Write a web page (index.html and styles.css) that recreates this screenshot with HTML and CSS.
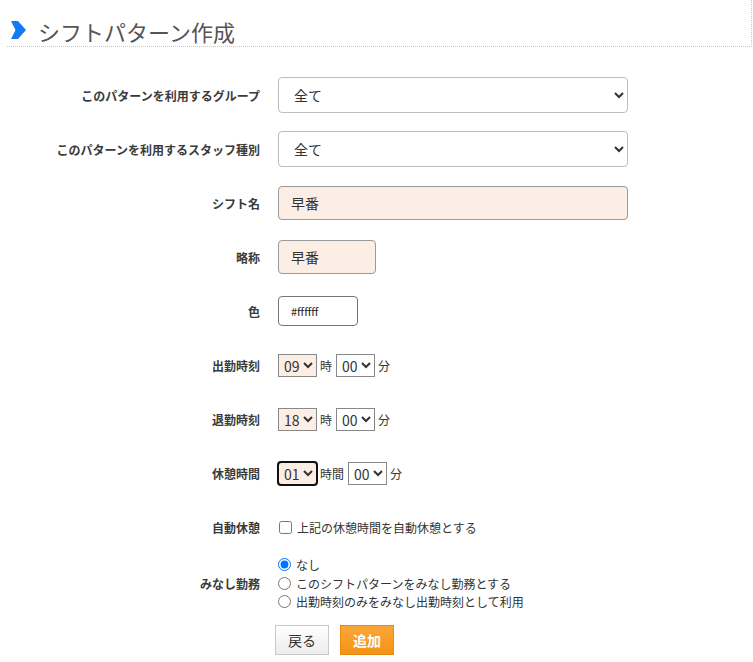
FILE: index.html
```html
<!DOCTYPE html>
<html lang="ja">
<head>
<meta charset="utf-8">
<title>シフトパターン作成</title>
<link rel="stylesheet" href="styles.css">
</head>
<body>
<div class="page">
  <h1 class="title">
    <svg class="chev" width="15" height="18" viewBox="0 0 15 18"><polygon points="0,0 7,0 15,9 7,18 0,18 4.5,9" fill="#1479f7"/></svg>
    <span>シフトパターン作成</span>
  </h1>
  <form class="form">
    <div class="row">
      <label class="lbl">このパターンを利用するグループ</label>
      <div class="field"><select class="sel-wide"><option>全て</option></select></div>
    </div>
    <div class="row">
      <label class="lbl">このパターンを利用するスタッフ種別</label>
      <div class="field"><select class="sel-wide"><option>全て</option></select></div>
    </div>
    <div class="row">
      <label class="lbl">シフト名</label>
      <div class="field"><input class="txt txt-wide" type="text" value="早番"></div>
    </div>
    <div class="row">
      <label class="lbl">略称</label>
      <div class="field"><input class="txt txt-short" type="text" value="早番"></div>
    </div>
    <div class="row">
      <label class="lbl">色</label>
      <div class="field"><input class="color" type="text" value="#ffffff"></div>
    </div>
    <div class="row">
      <label class="lbl">出勤時刻</label>
      <div class="field inline">
        <select class="sel-time peach"><option>09</option></select><span class="unit">時</span>
        <select class="sel-time"><option>00</option></select><span class="unit">分</span>
      </div>
    </div>
    <div class="row">
      <label class="lbl">退勤時刻</label>
      <div class="field inline">
        <select class="sel-time peach"><option>18</option></select><span class="unit">時</span>
        <select class="sel-time"><option>00</option></select><span class="unit">分</span>
      </div>
    </div>
    <div class="row">
      <label class="lbl">休憩時間</label>
      <div class="field inline">
        <select class="sel-time peach focus"><option>01</option></select><span class="unit">時間</span>
        <select class="sel-time"><option>00</option></select><span class="unit">分</span>
      </div>
    </div>
    <div class="row">
      <label class="lbl">自動休憩</label>
      <div class="field">
        <label class="check"><input type="checkbox"><span>上記の休憩時間を自動休憩とする</span></label>
      </div>
    </div>
    <div class="row row-radio">
      <label class="lbl">みなし勤務</label>
      <div class="field radios">
        <label class="radio"><input type="radio" name="minashi" checked><span>なし</span></label>
        <label class="radio"><input type="radio" name="minashi"><span>このシフトパターンをみなし勤務とする</span></label>
        <label class="radio"><input type="radio" name="minashi"><span>出勤時刻のみをみなし出勤時刻として利用</span></label>
      </div>
    </div>
    <div class="actions">
      <button type="button" class="btn btn-back">戻る</button>
      <button type="button" class="btn btn-add">追加</button>
    </div>
  </form>
</div>
</body>
</html>
```
FILE: styles.css
```css
html, body {
  margin: 0;
  padding: 0;
  background: #fff;
}
body {
  font-family: "Noto Sans CJK JP", "Noto Sans", sans-serif;
  color: #333;
}
.page {
  width: 753px;
}
.title {
  margin: 0 1px 0 7px;
  padding: 15px 0 0 4px;
  height: 31px;
  display: flex;
  align-items: center;
  gap: 12px;
  font-size: 22px;
  font-weight: normal;
  color: #555;
  border-right: 1px dotted #c8c8c8;
  border-bottom: 1px dotted #c8c8c8;
}
.chev {
  display: block;
  flex: none;
  margin-top: -1px;
}
.form {
  padding-top: 21px;
}
.row {
  display: grid;
  grid-template-columns: 260px 1fr;
  column-gap: 18px;
  min-height: 54px;
  align-items: center;
}
.lbl {
  text-align: right;
  font-size: 12px;
  font-weight: bold;
  color: #3a3a3a;
}
.field {
  font-size: 12px;
}
.inline {
  display: flex;
  align-items: center;
  gap: 3px;
}
.sel-wide {
  width: 350px;
  height: 36px;
  border: 1px solid #bdbdbd;
  border-radius: 4px;
  background: #fff;
  padding: 0 10px 0 11px;
  font-family: inherit;
  font-size: 14px;
  color: #333;
}
.txt {
  height: 34px;
  box-sizing: border-box;
  border: 1px solid #999;
  border-radius: 4px;
  background: #fdeee5;
  padding: 0 12px;
  font-family: inherit;
  font-size: 14px;
  color: #333;
  margin: 0;
}
.txt-wide { width: 350px; }
.txt-short { width: 98px; }
.color {
  width: 80px;
  height: 30px;
  box-sizing: border-box;
  border: 1px solid #767676;
  border-radius: 4px;
  background: #fff;
  padding: 0 12px;
  font-family: inherit;
  font-size: 11px;
  color: #222;
  margin: 0;
}
.sel-time {
  height: 23px;
  width: 39px;
  border: 1px solid #888;
  border-radius: 0;
  background: #fff;
  padding: 0 0 0 1px;
  font-family: inherit;
  font-size: 14px;
  color: #333;
  margin: 0;
}
.peach { background: #fdeee5; }
.focus {
  outline: 2px solid #111;
  outline-offset: -1px;
  border-radius: 3px;
}
.unit {
  font-size: 12px;
  color: #333;
  margin-right: 1px;
}
.check, .radio {
  display: flex;
  align-items: center;
  font-size: 12px;
  color: #333;
}
.check input {
  margin: 0 5px 0 1px;
  width: 13px;
  height: 13px;
}
.row-radio {
  min-height: 58px;
}
.radios {
  display: flex;
  flex-direction: column;
}
.radio {
  height: 18.5px;
}
.radio input {
  margin: 0 5px 0 0;
  width: 13px;
  height: 13px;
}
.actions {
  display: flex;
  gap: 11px;
  padding: 13px 0 0 275px;
}
.btn {
  width: 54px;
  height: 30px;
  box-sizing: border-box;
  font-family: inherit;
  font-size: 14px;
  cursor: pointer;
  border-radius: 0;
  padding: 0;
}
.btn-back {
  border: 1px solid #c9c9c9;
  background: linear-gradient(#ffffff, #ececec);
  color: #333;
}
.btn-add {
  border: 1px solid #e88a12;
  background: linear-gradient(#fba63a, #f59313);
  color: #fff;
  font-weight: bold;
}
```
